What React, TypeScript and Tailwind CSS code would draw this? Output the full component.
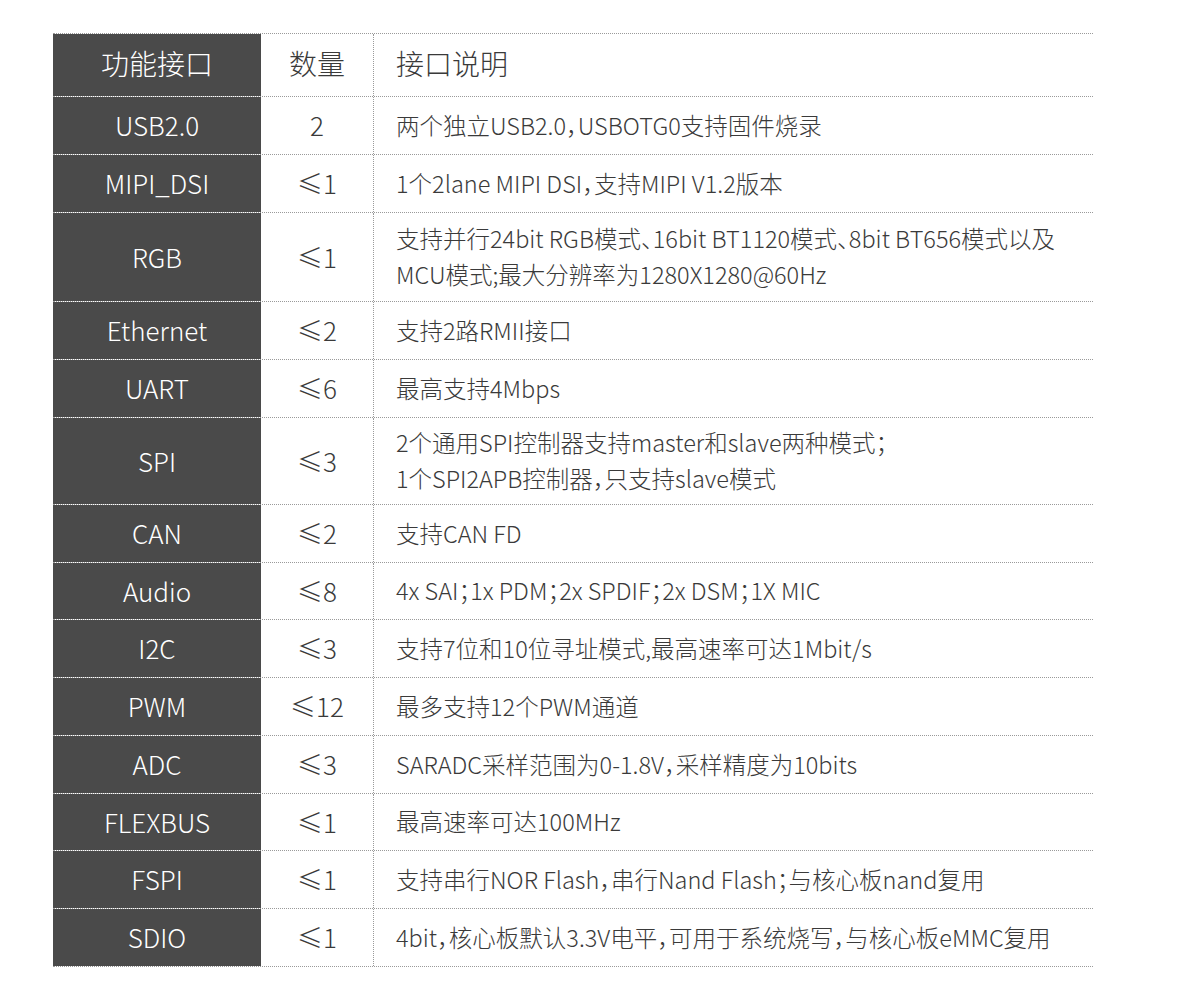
import React from "react";

const rows: { name: string; qty: string; desc: string[]; h: string }[] = [
  { name: "USB2.0", qty: "2", desc: ["两个独立USB2.0，USBOTG0支持固件烧录"], h: "h-[58px]" },
  { name: "MIPI_DSI", qty: "≤1", desc: ["1个2lane MIPI DSI，支持MIPI V1.2版本"], h: "h-[58px]" },
  { name: "RGB", qty: "≤1", desc: ["支持并行24bit RGB模式、16bit BT1120模式、8bit BT656模式以及", "MCU模式;最大分辨率为1280X1280@60Hz"], h: "h-[89px]" },
  { name: "Ethernet", qty: "≤2", desc: ["支持2路RMII接口"], h: "h-[58px]" },
  { name: "UART", qty: "≤6", desc: ["最高支持4Mbps"], h: "h-[58px]" },
  { name: "SPI", qty: "≤3", desc: ["2个通用SPI控制器支持master和slave两种模式；", "1个SPI2APB控制器，只支持slave模式"], h: "h-[87px]" },
  { name: "CAN", qty: "≤2", desc: ["支持CAN FD"], h: "h-[58px]" },
  { name: "Audio", qty: "≤8", desc: ["4x SAI；1x PDM；2x SPDIF；2x DSM；1X MIC"], h: "h-[57px]" },
  { name: "I2C", qty: "≤3", desc: ["支持7位和10位寻址模式,最高速率可达1Mbit/s"], h: "h-[58px]" },
  { name: "PWM", qty: "≤12", desc: ["最多支持12个PWM通道"], h: "h-[58px]" },
  { name: "ADC", qty: "≤3", desc: ["SARADC采样范围为0-1.8V，采样精度为10bits"], h: "h-[58px]" },
  { name: "FLEXBUS", qty: "≤1", desc: ["最高速率可达100MHz"], h: "h-[57px]" },
  { name: "FSPI", qty: "≤1", desc: ["支持串行NOR Flash，串行Nand Flash；与核心板nand复用"], h: "h-[58px]" },
  { name: "SDIO", qty: "≤1", desc: ["4bit，核心板默认3.3V电平，可用于系统烧写，与核心板eMMC复用"], h: "h-[58px]" },
];

export default function App() {
  return (
    <div
      className="w-[1200px] h-[1000px] bg-white pt-[33px] pl-[53px] font-light [font-feature-settings:'halt']"
      style={{ fontFamily: '"Noto Sans CJK SC", "Noto Sans", sans-serif' }}
    >
      <div className="w-[1040px] flex flex-col border-t border-dotted border-[#9a9a9a]">
        <div className="flex h-[63px] border-b border-dotted border-[#9a9a9a]">
          <div className="w-[208px] bg-[#4a4a4a] text-white text-[28px] pb-[4px] flex items-center justify-center">功能接口</div>
          <div className="w-[113px] border-r border-dotted border-[#9a9a9a] text-[#3a3a3a] text-[28px] pb-[4px] flex items-center justify-center">数量</div>
          <div className="flex-1 pl-[22px] text-[#3a3a3a] text-[28px] pb-[4px] flex items-center">接口说明</div>
        </div>
        {rows.map((r) => (
          <div key={r.name} className={`flex ${r.h} border-b border-dotted border-[#9a9a9a]`}>
            <div className="w-[208px] bg-[#4a4a4a] text-white text-[26px] pb-[2px] flex items-center justify-center">{r.name}</div>
            <div className="w-[113px] border-r border-dotted border-[#9a9a9a] text-[#3a3a3a] text-[26px] pb-[2px] flex items-center justify-center">{r.qty}</div>
            <div className="flex-1 pl-[22px] text-[#3a3a3a] text-[23.5px] leading-[36px] pb-[2px] flex flex-col justify-center">
              {r.desc.map((d, i) => (
                <div key={i}>{d}</div>
              ))}
            </div>
          </div>
        ))}
      </div>
    </div>
  );
}
